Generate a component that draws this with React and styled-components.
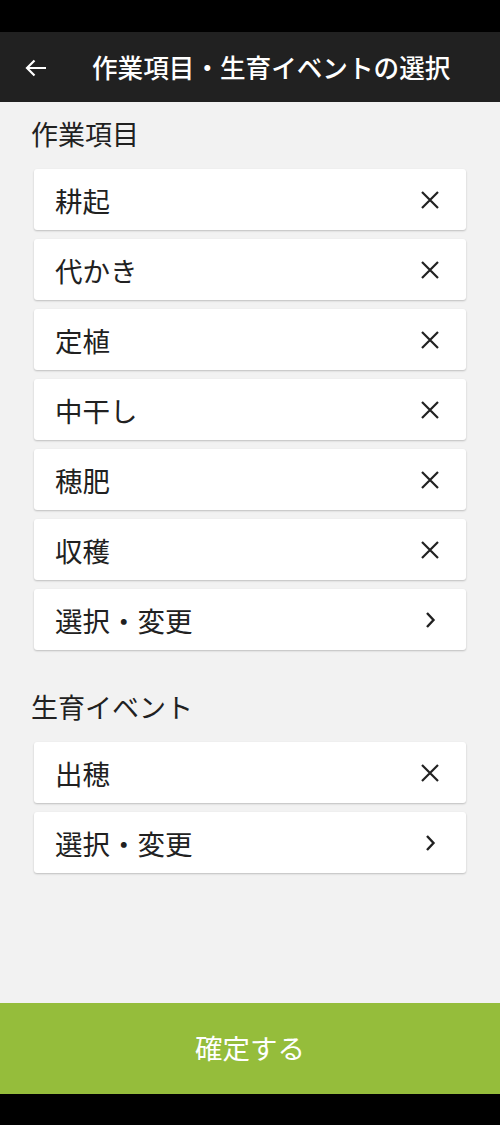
import styled, { createGlobalStyle } from 'styled-components';

const GlobalStyle = createGlobalStyle`
	html, body {
		margin: 0;
		padding: 0;
		background: #000;
	}
	body {
		font-family: 'Noto Sans CJK JP', 'Noto Sans', sans-serif;
		color: #212121;
	}
`;

const Screen = styled.div`
	display: flex;
	flex-direction: column;
	width: 500px;
	height: 1125px;
	background: #f2f2f2;
`;

const StatusBar = styled.div`
	height: ${(p) => p.h}px;
	flex-shrink: 0;
	background: #000;
`;

const Header = styled.header`
	display: flex;
	align-items: center;
	height: 70px;
	flex-shrink: 0;
	background: #212121;
	color: #fff;
	padding: 0 0 0 24px;
	box-sizing: border-box;
`;

const BackButton = styled.button`
	display: flex;
	align-items: center;
	justify-content: center;
	width: 24px;
	height: 24px;
	padding: 0;
	margin: 2px 44px 0 0;
	border: none;
	background: none;
	color: #fff;
`;

const HeaderTitle = styled.h1`
	margin: 0;
	font-size: 25.6px;
	font-weight: 500;
	line-height: 36px;
`;

const Content = styled.main`
	flex: 1;
	display: flex;
	flex-direction: column;
	gap: 25px;
`;

const Section = styled.section`
	display: flex;
	flex-direction: column;
`;

const SectionTitle = styled.h2`
	margin: 0;
	padding: 14px 0 17px 31px;
	font-size: 27px;
	font-weight: 400;
	line-height: 36px;
`;

const CardList = styled.ul`
	list-style: none;
	margin: 0;
	padding: 0 34px;
	display: flex;
	flex-direction: column;
	gap: 9px;
`;

const Card = styled.li`
	display: flex;
	align-items: center;
	justify-content: space-between;
	height: 61px;
	padding: 0 27px 0 21px;
	box-sizing: border-box;
	background: #fff;
	border-radius: 3px;
	box-shadow: 0 1px 2px rgba(0, 0, 0, 0.22);
	font-size: 27.5px;
	line-height: 36px;
`;

const IconBox = styled.span`
	display: flex;
	align-items: center;
	justify-content: center;
	width: 18px;
	height: 18px;
`;

const ConfirmButton = styled.button`
	height: 91px;
	flex-shrink: 0;
	border: none;
	background: #95bd3b;
	color: #fff;
	font-family: inherit;
	font-size: 27.5px;
	line-height: 36px;
	padding: 0 0 4px;
`;

const CloseIcon = () => (
	<IconBox>
		<svg width="18" height="18" viewBox="0 0 18 18">
			<path d="M1 1 L17 17 M17 1 L1 17" stroke="#212121" strokeWidth="2.2" fill="none" />
		</svg>
	</IconBox>
);

const ChevronIcon = () => (
	<IconBox>
		<svg width="18" height="18" viewBox="0 0 18 18">
			<path d="M6 2 L12.5 9 L6 16" stroke="#212121" strokeWidth="2.4" fill="none" />
		</svg>
	</IconBox>
);

const BackArrow = () => (
	<svg width="22" height="18" viewBox="0 0 22 18">
		<path d="M21 9 H2.5 M9.5 1.5 L2 9 L9.5 16.5" stroke="#fff" strokeWidth="2.2" fill="none" />
	</svg>
);

const sections = [
	{ title: '作業項目', items: ['耕起', '代かき', '定植', '中干し', '穂肥', '収穫'] },
	{ title: '生育イベント', items: ['出穂'] },
];

export default function App() {
	return (
		<>
			<GlobalStyle />
			<Screen>
				<StatusBar h={32} />
				<Header>
					<BackButton>
						<BackArrow />
					</BackButton>
					<HeaderTitle>作業項目・生育イベントの選択</HeaderTitle>
				</Header>
				<Content>
					{sections.map((section) => (
						<Section key={section.title}>
							<SectionTitle>{section.title}</SectionTitle>
							<CardList>
								{section.items.map((item) => (
									<Card key={item}>
										<span>{item}</span>
										<CloseIcon />
									</Card>
								))}
								<Card>
									<span>選択・変更</span>
									<ChevronIcon />
								</Card>
							</CardList>
						</Section>
					))}
				</Content>
				<ConfirmButton>確定する</ConfirmButton>
				<StatusBar h={31} />
			</Screen>
		</>
	);
}
